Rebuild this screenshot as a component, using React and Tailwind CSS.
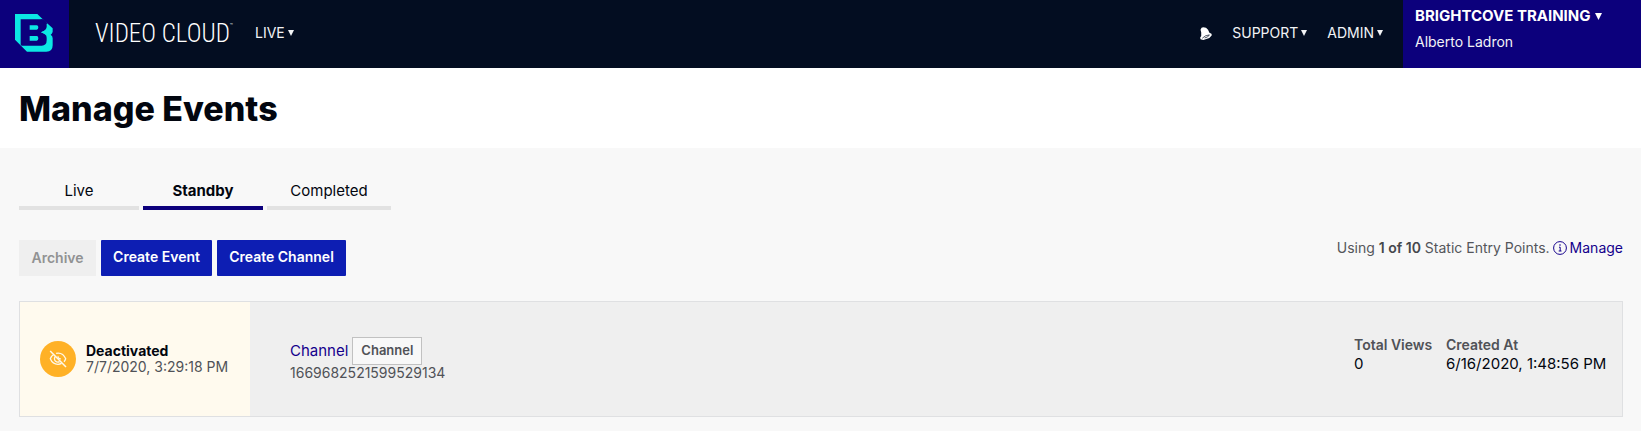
import React from "react";

function BrandMark() {
  return (
    <svg viewBox="0 0 114 114" className="h-[38px] w-[38px]" aria-hidden="true">
      <path
        fill="#0ce8e4"
        d="M0 0H67L88 20L113 43V53Q112 59 107 62Q113 66 113 73V94Q113 113 94 113H36L0 77Z"
      />
      <path
        fill="#0c007c"
        d="M17 16H78Q95 17 95 33V39Q94 49 78 55Q95 60 95 71V79Q95 95 80 95H20L17 92Z"
      />
      <path fill="#0c007c" d="M84 16L97 28L92 32L76 16Z" />
      <path
        fill="#0ce8e4"
        d="M44 34H65Q70 34 70 40Q70 47 65 47H44ZM44 66H65Q70 66 70 73Q70 80 65 80H44ZM78 55L95 47V63Z"
      />
    </svg>
  );
}

function Caret({ className = "h-[6px] w-[6px]" }) {
  return (
    <svg viewBox="0 0 6 6" className={`shrink-0 ${className}`} aria-hidden="true">
      <path d="M0 0H6L3 6Z" fill="currentColor" />
    </svg>
  );
}

function Bell() {
  return (
    <svg viewBox="0 0 34 38" className="h-[13px] w-[12px]" aria-hidden="true">
      <path
        fill="#fff"
        d="M1 8Q3 1 9 1Q18 1 23 8L27 17L33 20L34 24Q29 33 18 35L9 38L1 36L0 31L3 26V16Z"
      />
      <path
        d="M6 33Q14 24 27 23Q23 31 13 32"
        fill="none"
        stroke="#030d21"
        strokeWidth="2"
      />
    </svg>
  );
}

function HiddenEye() {
  return (
    <svg
      viewBox="0 0 18 18"
      className="h-[18px] w-[18px]"
      fill="none"
      stroke="#fff8e8"
      strokeWidth="1.3"
      aria-hidden="true"
    >
      <path d="M5 4.2C3.2 5.2 2 6.8 1.3 8.8C2.8 12.4 5.6 14.3 9 14.3C10.3 14.3 11.5 14 12.6 13.4" />
      <path d="M7.1 3.4C11.5 2.5 15 4.8 16.7 8.8C16.3 9.9 15.7 10.9 15 11.7" />
      <path d="M6.3 6.5C5 8 5.2 10.1 6.6 11.3C7.7 12.3 9.3 12.4 10.6 11.6" />
      <path d="M9 6.2C9 8 10 9 11.9 8.9" />
      <path d="M1.2 1L17 17" strokeWidth="1.5" />
    </svg>
  );
}

function InfoIcon() {
  return (
    <svg viewBox="0 0 14 14" className="h-[14px] w-[14px]" fill="none" aria-hidden="true">
      <circle cx="7" cy="7" r="6.4" stroke="#14008c" />
      <path d="M6 6.2H7.2V10M5.7 10H8.5" stroke="#14008c" />
      <circle cx="7" cy="4" r="0.8" fill="#14008c" />
    </svg>
  );
}

function NavMenu({ label, className = "" }) {
  return (
    <button className={`flex items-center gap-[3px] pb-[2px] text-sm ${className}`}>
      {label}
      <Caret />
    </button>
  );
}

function Header() {
  return (
    <header className="flex h-[68px] items-stretch bg-[#030d21] text-[#f2f3f6]">
      <a
        href="#home"
        aria-label="Brightcove home"
        className="flex w-[69px] items-start bg-[#0c007c] pl-[15px] pt-[14px]"
      >
        <BrandMark />
      </a>
      <div className="flex w-[186px] items-center pl-[26px]">
        <span className="flex items-start whitespace-nowrap font-['Liberation_Sans_Narrow','Roboto_Condensed','Roboto',sans-serif] text-[25px] font-light leading-7 text-white">
          VIDEO CLOUD
          <span className="text-[6px] leading-[10px]">™</span>
        </span>
      </div>
      <NavMenu label="LIVE" />
      <nav className="ml-auto flex items-center pr-5">
        <button aria-label="Notifications" className="mr-5 pb-[2px]">
          <Bell />
        </button>
        <NavMenu label="SUPPORT" className="mr-5" />
        <NavMenu label="ADMIN" />
      </nav>
      <div className="w-[238px] bg-[#0c007c] pl-3 pt-1">
        <button className="flex items-center gap-1 whitespace-nowrap text-[15px] font-bold leading-6 text-white">
          BRIGHTCOVE TRAINING
          <Caret className="h-[7px] w-[7px]" />
        </button>
        <p className="pt-[2px] text-sm leading-6">Alberto Ladron</p>
      </div>
    </header>
  );
}

function Tabs() {
  const base = "h-[39px] border-b-4 pt-1 text-[15px] leading-5";
  return (
    <div role="tablist" className="flex gap-1">
      <button role="tab" aria-selected="false" className={`${base} w-[120px] border-[#e2e2e2]`}>
        Live
      </button>
      <button role="tab" aria-selected="true" className={`${base} w-[120px] border-[#0c007c] font-bold`}>
        Standby
      </button>
      <button role="tab" aria-selected="false" className={`${base} w-[124px] border-[#e2e2e2]`}>
        Completed
      </button>
    </div>
  );
}

function Toolbar() {
  const primary = "h-9 rounded-[1px] bg-[#0d1eb3] pb-[2px] text-sm font-semibold text-white";
  return (
    <div className="mt-[30px] flex items-start justify-between">
      <div className="flex gap-[5px]">
        <button disabled className="h-9 w-[77px] bg-[#efefef] text-sm font-semibold text-[#919293]">
          Archive
        </button>
        <button className={`${primary} w-[111px]`}>Create Event</button>
        <button className={`${primary} w-[129px]`}>Create Channel</button>
      </div>
      <p className="flex items-center gap-[3px] text-sm leading-4 text-[#54565b]">
        <span>
          Using <b className="font-semibold text-[#45474c]">1 of 10</b> Static Entry Points.
        </span>
        <InfoIcon />
        <a href="#manage" className="text-[#14008c]">
          Manage
        </a>
      </p>
    </div>
  );
}

function EventCard() {
  return (
    <article className="mt-[25px] flex h-[116px] border border-[#dfe0e2] bg-[#efefef]">
      <div className="flex w-[230px] items-center gap-[10px] bg-[#fffaee] pl-5">
        <span className="flex h-9 w-9 items-center justify-center rounded-full bg-[#ffb126]">
          <HiddenEye />
        </span>
        <div>
          <p className="text-sm font-bold leading-4">Deactivated</p>
          <p className="text-sm leading-4 text-[#505257]">7/7/2020, 3:29:18 PM</p>
        </div>
      </div>
      <div className="pl-10 pt-[35px]">
        <div className="flex items-center gap-1">
          <a href="#channel" className="text-[15px] leading-7 text-[#14008c]">
            Channel
          </a>
          <span className="flex h-7 w-[70px] items-center justify-center border border-[#c1c1c1] bg-[#f8f8f8] text-[13px] font-semibold text-[#505257]">
            Channel
          </span>
        </div>
        <p className="text-sm leading-4 text-[#505257]">1669682521599529134</p>
      </div>
      <dl className="ml-auto flex gap-4 whitespace-nowrap pr-5 pt-[34px]">
        <div className="w-[76px]">
          <dt className="text-sm font-semibold leading-[18px] text-[#505257]">Total Views</dt>
          <dd className="text-[15px] leading-5">0</dd>
        </div>
        <div className="w-[156px]">
          <dt className="text-sm font-semibold leading-[18px] text-[#505257]">Created At</dt>
          <dd className="text-[15px] leading-5">6/16/2020, 1:48:56 PM</dd>
        </div>
      </dl>
    </article>
  );
}

export default function App() {
  return (
    <div className="min-h-screen bg-[#f8f8f8] font-['Inter',sans-serif] text-[#02060f]">
      <Header />
      <div className="flex h-20 items-center bg-white px-[19px] pt-[2px]">
        <h1 className="text-[34px] font-extrabold leading-10">Manage Events</h1>
      </div>
      <main className="pl-[19px] pr-[18px] pt-[23px]">
        <Tabs />
        <Toolbar />
        <EventCard />
      </main>
    </div>
  );
}
